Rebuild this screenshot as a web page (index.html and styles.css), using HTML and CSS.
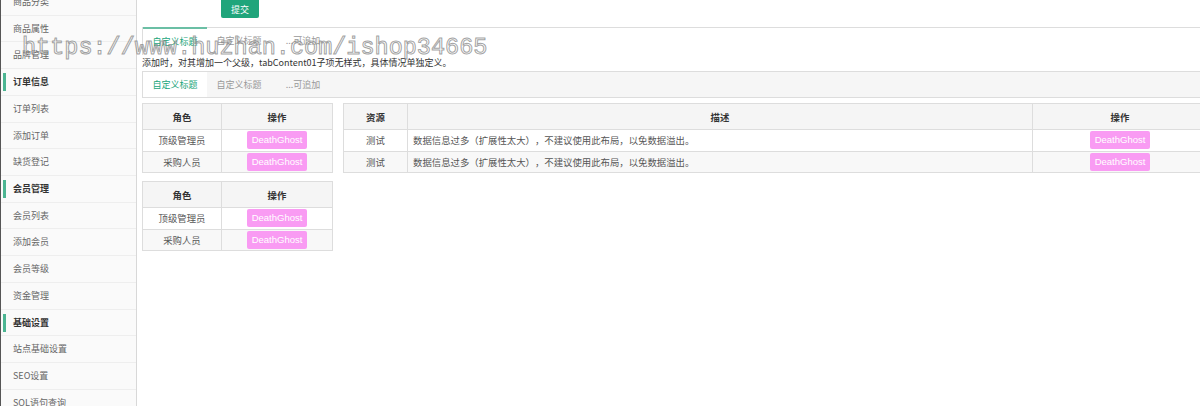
FILE: index.html
```html
<!DOCTYPE html>
<html lang="zh-CN">

<head>
    <meta charset="UTF-8">
    <meta name="viewport" content="width=device-width, initial-scale=1.0">
    <title>后台管理</title>
    <link rel="stylesheet" href="styles.css">
</head>

<body>
    <div class="layout">
        <!-- 左侧菜单 -->
        <aside class="sidebar">
            <ul class="menu">
                <li>商品分类</li>
                <li>商品属性</li>
                <li>品牌管理</li>
                <li class="menu-title">订单信息</li>
                <li>订单列表</li>
                <li>添加订单</li>
                <li>缺货登记</li>
                <li class="menu-title">会员管理</li>
                <li>会员列表</li>
                <li>添加会员</li>
                <li>会员等级</li>
                <li>资金管理</li>
                <li class="menu-title">基础设置</li>
                <li>站点基础设置</li>
                <li>SEO设置</li>
                <li>SQL语句查询</li>
            </ul>
        </aside>

        <main class="main">
            <div class="form-row">
                <button class="btn-submit">提交</button>
            </div>

            <!-- 选项卡 -->
            <div class="tab-bar tab-bar-plain">
                <span class="tab active">自定义标题</span>
                <span class="tab">自定义标题</span>
                <span class="tab">...可追加</span>
            </div>
            <p class="tab-note">添加时，对其增加一个父级，tabContent01子项无样式，具体情况单独定义。</p>
            <div class="tab-bar tab-bar-gray">
                <span class="tab active">自定义标题</span>
                <span class="tab">自定义标题</span>
                <span class="tab">...可追加</span>
            </div>

            <!-- 表格 -->
            <div class="table-row">
                <div class="table-col">
                    <table class="data-table">
                        <colgroup><col class="col-role"><col></colgroup>
                        <thead>
                            <tr><th>角色</th><th>操作</th></tr>
                        </thead>
                        <tbody>
                            <tr><td>顶级管理员</td><td><span class="btn-pink">DeathGhost</span></td></tr>
                            <tr><td>采购人员</td><td><span class="btn-pink">DeathGhost</span></td></tr>
                        </tbody>
                    </table>
                    <table class="data-table">
                        <colgroup><col class="col-role"><col></colgroup>
                        <thead>
                            <tr><th>角色</th><th>操作</th></tr>
                        </thead>
                        <tbody>
                            <tr><td>顶级管理员</td><td><span class="btn-pink">DeathGhost</span></td></tr>
                            <tr><td>采购人员</td><td><span class="btn-pink">DeathGhost</span></td></tr>
                        </tbody>
                    </table>
                </div>

                <table class="data-table wide-table">
                    <colgroup><col class="col-source"><col class="col-desc"><col></colgroup>
                    <thead>
                        <tr><th>资源</th><th>描述</th><th>操作</th></tr>
                    </thead>
                    <tbody>
                        <tr>
                            <td>测试</td>
                            <td class="desc">数据信息过多（扩展性太大），不建议使用此布局，以免数据溢出。</td>
                            <td><span class="btn-pink">DeathGhost</span></td>
                        </tr>
                        <tr>
                            <td>测试</td>
                            <td class="desc">数据信息过多（扩展性太大），不建议使用此布局，以免数据溢出。</td>
                            <td><span class="btn-pink">DeathGhost</span></td>
                        </tr>
                    </tbody>
                </table>
            </div>
        </main>
    </div>

    <div class="watermark">https://www.huzhan.com/ishop34665</div>
</body>

</html>
```

FILE: styles.css
```css
* {
    box-sizing: border-box;
}

body {
    margin: 0;
    height: 406px;
    overflow: hidden;
    background-color: #ffffff;
    color: #333333;
    font-family: "Noto Sans CJK SC", "Liberation Sans", sans-serif;
    font-size: 9px;
    text-spacing-trim: space-all;
}

.layout {
    display: flex;
    height: 406px;
}

/* sidebar */
.sidebar {
    width: 137px;
    flex-shrink: 0;
    background-color: #fafafa;
    border-left: 1px solid #555555;
    border-right: 1px solid #d8d8d8;
    overflow: hidden;
}

.menu {
    list-style: none;
    margin: -11px 0 0;
    padding: 0;
}

.menu li {
    position: relative;
    height: 26.73px;
    line-height: 26px;
    padding-left: 12px;
    border-bottom: 1px solid #eeeeee;
    color: #666666;
}

.menu .menu-title {
    color: #333333;
    font-weight: bold;
}

.menu .menu-title::before {
    content: "";
    position: absolute;
    left: 2px;
    top: 4px;
    width: 3px;
    height: 18px;
    background-color: #4cb592;
}

/* main */
.main {
    flex: 1;
    min-width: 0;
    padding-left: 5px;
    overflow: hidden;
}

.form-row {
    height: 18px;
    padding-left: 79px;
    margin-bottom: 9px;
}

.btn-submit {
    width: 38px;
    height: 18px;
    padding: 0;
    border: none;
    border-radius: 0 0 2px 2px;
    background-color: #20a57b;
    color: #ffffff;
    font-family: inherit;
    font-size: 9px;
    cursor: pointer;
}

.tab-bar {
    display: flex;
    width: 1100px;
    border-left: 1px solid #dddddd;
    border-top: 1px solid #dddddd;
}

.tab-bar-plain {
    height: 28px;
}

.tab-bar-gray {
    height: 27px;
    background-color: #f6f6f6;
    border-bottom: 1px solid #dddddd;
    margin-bottom: 5px;
}

.tab {
    width: 64px;
    text-align: center;
    line-height: 26px;
    color: #999999;
}

.tab.active {
    color: #20a57b;
}

.tab-bar-plain .tab.active {
    margin-top: -1px;
    border-top: 2px solid #6bbfa5;
}

.tab-bar-gray .tab.active {
    background-color: #ffffff;
}

.tab-note {
    margin: 0;
    height: 16px;
    line-height: 16px;
    color: #333333;
}

/* tables */
.table-row {
    display: flex;
    align-items: flex-start;
}

.table-col {
    width: 191px;
    flex-shrink: 0;
    display: flex;
    flex-direction: column;
    gap: 8px;
}

.data-table {
    width: 100%;
    border-collapse: collapse;
    table-layout: fixed;
    border: 1px solid #dddddd;
    font-size: 9.4px;
}

.data-table th,
.data-table td {
    border: 1px solid #dddddd;
    text-align: center;
    padding: 0;
}

.data-table th {
    height: 26px;
    background-color: #f5f5f5;
    color: #333333;
    font-weight: bold;
}

.data-table td {
    height: 21.5px;
    color: #555555;
}

.data-table tbody tr:nth-child(2) {
    background-color: #f8f8f8;
}

.data-table td.desc {
    text-align: left;
    padding-left: 5px;
}

.col-role {
    width: 79px;
}

.wide-table {
    width: 865px;
    flex-shrink: 0;
    margin-left: 10px;
}

.col-source {
    width: 64px;
}

.col-desc {
    width: 625px;
}

.btn-pink {
    display: inline-block;
    width: 60px;
    height: 18px;
    line-height: 18px;
    border-radius: 2px;
    background-color: #f99bf3;
    color: #ffffff;
    font-family: "Liberation Sans", sans-serif;
    font-size: 9.5px;
    vertical-align: middle;
}

/* site stamp over the page */
.watermark {
    position: absolute;
    left: 22px;
    top: 36px;
    font-family: "Liberation Mono", monospace;
    font-size: 23.5px;
    line-height: 1;
    white-space: nowrap;
    color: rgba(255, 255, 255, 0.35);
    -webkit-text-stroke: 1px rgba(120, 120, 120, 0.7);
    pointer-events: none;
}
```
